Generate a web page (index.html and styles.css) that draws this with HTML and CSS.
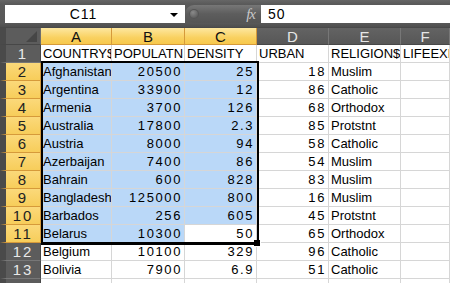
FILE: index.html
```html
<!DOCTYPE html>
<html>
<head>
<meta charset="utf-8">
<link rel="stylesheet" href="styles.css">
</head>
<body>
<div class="app">
  <div class="fbar">
    <div class="namebox"><span class="ref">C11</span><span class="dd"></span></div>
    <div class="knob"><span class="dot"></span><span class="fx">fx</span></div>
    <div class="input">50</div>
  </div>
  <div class="sheet">
    <div class="corner"><span class="tri"></span></div>
    <div class="ch sel">A</div><div class="ch sel">B</div><div class="ch sel">C</div><div class="ch">D</div><div class="ch">E</div><div class="ch last">F</div>

    <div class="rh">1</div>
    <div class="c">COUNTRY$</div><div class="c">POPULATN</div><div class="c">DENSITY</div><div class="c">URBAN</div><div class="c">RELIGION$</div><div class="c">LIFEEXPF</div>

    <div class="rh sel">2</div>
    <div class="c s">Afghanistan</div><div class="c s n">20500</div><div class="c s n">25</div><div class="c n">18</div><div class="c">Muslim</div><div class="c"></div>
    <div class="rh sel">3</div>
    <div class="c s">Argentina</div><div class="c s n">33900</div><div class="c s n">12</div><div class="c n">86</div><div class="c">Catholic</div><div class="c"></div>
    <div class="rh sel">4</div>
    <div class="c s">Armenia</div><div class="c s n">3700</div><div class="c s n">126</div><div class="c n">68</div><div class="c">Orthodox</div><div class="c"></div>
    <div class="rh sel">5</div>
    <div class="c s">Australia</div><div class="c s n">17800</div><div class="c s n">2.3</div><div class="c n">85</div><div class="c">Protstnt</div><div class="c"></div>
    <div class="rh sel">6</div>
    <div class="c s">Austria</div><div class="c s n">8000</div><div class="c s n">94</div><div class="c n">58</div><div class="c">Catholic</div><div class="c"></div>
    <div class="rh sel">7</div>
    <div class="c s">Azerbaijan</div><div class="c s n">7400</div><div class="c s n">86</div><div class="c n">54</div><div class="c">Muslim</div><div class="c"></div>
    <div class="rh sel">8</div>
    <div class="c s">Bahrain</div><div class="c s n">600</div><div class="c s n">828</div><div class="c n">83</div><div class="c">Muslim</div><div class="c"></div>
    <div class="rh sel">9</div>
    <div class="c s">Bangladesh</div><div class="c s n">125000</div><div class="c s n">800</div><div class="c n">16</div><div class="c">Muslim</div><div class="c"></div>
    <div class="rh sel">10</div>
    <div class="c s">Barbados</div><div class="c s n">256</div><div class="c s n">605</div><div class="c n">45</div><div class="c">Protstnt</div><div class="c"></div>
    <div class="rh sel">11</div>
    <div class="c s">Belarus</div><div class="c s n">10300</div><div class="c n">50</div><div class="c n">65</div><div class="c">Orthodox</div><div class="c"></div>
    <div class="rh">12</div>
    <div class="c">Belgium</div><div class="c n">10100</div><div class="c n">329</div><div class="c n">96</div><div class="c">Catholic</div><div class="c"></div>
    <div class="rh">13</div>
    <div class="c">Bolivia</div><div class="c n">7900</div><div class="c n">6.9</div><div class="c n">51</div><div class="c">Catholic</div><div class="c"></div>
    <div class="rh">14</div>
    <div class="c"></div><div class="c"></div><div class="c"></div><div class="c"></div><div class="c"></div><div class="c"></div>

    <div class="selbox"><span class="handle"></span></div>
  </div>
</div>
</body>
</html>
```
FILE: styles.css
```css
html, body {
  margin: 0;
  padding: 0;
}
body {
  width: 450px;
  height: 283px;
  overflow: hidden;
  background: #4b4b4b;
  font-family: "Liberation Sans", Arial, sans-serif;
  font-size: 13px;
}
.app {
  display: flex;
  flex-direction: column;
}
.fbar {
  height: 28px;
  box-sizing: border-box;
  padding: 5px 0 5px 5px;
  display: flex;
  background: linear-gradient(#666 0, #5a5a5a 4px, #585858 23px, #4e4e4e 27px, #444 28px);
}
.namebox {
  width: 180px;
  background: #fff;
  display: flex;
  align-items: center;
  position: relative;
}
.namebox .ref {
  flex: 1;
  text-align: center;
  font-size: 14px;
  letter-spacing: 1px;
  color: #000;
  padding-right: 8px;
}
.namebox .dd {
  width: 0;
  height: 0;
  border-left: 4px solid transparent;
  border-right: 4px solid transparent;
  border-top: 4px solid #000;
  margin-right: 7px;
  margin-top: 1px;
}
.knob {
  width: 76px;
  border-radius: 9px 0 0 9px;
  background: linear-gradient(#777, #5d5d5d 50%, #555);
  display: flex;
  align-items: center;
  justify-content: space-between;
  padding: 0 6px 0 4px;
  box-sizing: border-box;
}
.knob .dot {
  width: 10px;
  height: 10px;
  border-radius: 50%;
  background: radial-gradient(circle at 40% 35%, #8a8a8a, #5a5a5a 70%);
  box-shadow: inset 0 0 0 1px #555;
}
.knob .fx {
  font-family: "Liberation Serif", serif;
  font-style: italic;
  font-size: 15px;
  color: #c8c8c8;
  letter-spacing: -1px;
}
.input {
  flex: 1;
  background: #fff;
  font-size: 14px;
  letter-spacing: 1px;
  color: #000;
  padding-left: 7px;
  line-height: 18px;
}
.sheet {
  display: grid;
  grid-template-columns: 41px 71px 73px 72px 72px 72px 1fr;
  grid-template-rows: 17px repeat(14, 18px);
  background: #fff;
  position: relative;
}
.corner {
  background: #5c5c5c;
  border-left: 6px solid #4a4a4a;
  border-right: 1px solid #6e6e6e;
  border-bottom: 1px solid #474747;
  position: relative;
}
.corner .tri {
  position: absolute;
  right: 3px;
  bottom: 2px;
  width: 0;
  height: 0;
  border-left: 11px solid transparent;
  border-bottom: 11px solid #464646;
}
.ch {
  background: linear-gradient(#636363, #575757);
  color: #e6e6e6;
  text-align: center;
  font-size: 15px;
  line-height: 17px;
  border-right: 1px solid #777;
  border-bottom: 1px solid #474747;
  box-sizing: border-box;
}
.ch.sel {
  background: linear-gradient(#fde7a0, #f9d160 60%, #f7c84c);
  color: #111;
  border-right: 1px solid #d69a3a;
  border-bottom: 1px solid #d69a3a;
}
.rh {
  background: #5c5c5c;
  color: #e8e8e8;
  border-left: 6px solid #4a4a4a;
  border-bottom: 1px solid #777;
  border-right: 1px solid #474747;
  text-align: center;
  font-size: 15px;
  line-height: 18px;
  letter-spacing: 2px;
  box-sizing: border-box;
}
.rh.sel {
  background: linear-gradient(#fbd97a, #f7cd5a);
  color: #222;
  border-bottom: 1px solid #d69a3a;
  border-right: 1px solid #d69a3a;
}
.c {
  box-sizing: border-box;
  border-right: 1px solid #d6d6d6;
  border-bottom: 1px solid #d6d6d6;
  padding: 0 2px;
  line-height: 18px;
  white-space: nowrap;
  overflow: hidden;
  color: #000;
}
.c.n {
  text-align: right;
  padding-right: 2px;
  letter-spacing: 1.6px;
}
.c.s {
  background: #bad8f8;
}
.selbox {
  position: absolute;
  grid-row: 3 / 13;
  grid-column: 2 / 5;
  top: -2px;
  left: 0;
  right: -2px;
  bottom: -2px;
  border: 2px solid #000;
  border-bottom-width: 3px;
  pointer-events: none;
}
.selbox .handle {
  position: absolute;
  right: -4px;
  bottom: -5px;
  width: 6px;
  height: 6px;
  background: #000;
  border: 1px solid #fff;
  border-top: none;
  border-left: none;
}
```
